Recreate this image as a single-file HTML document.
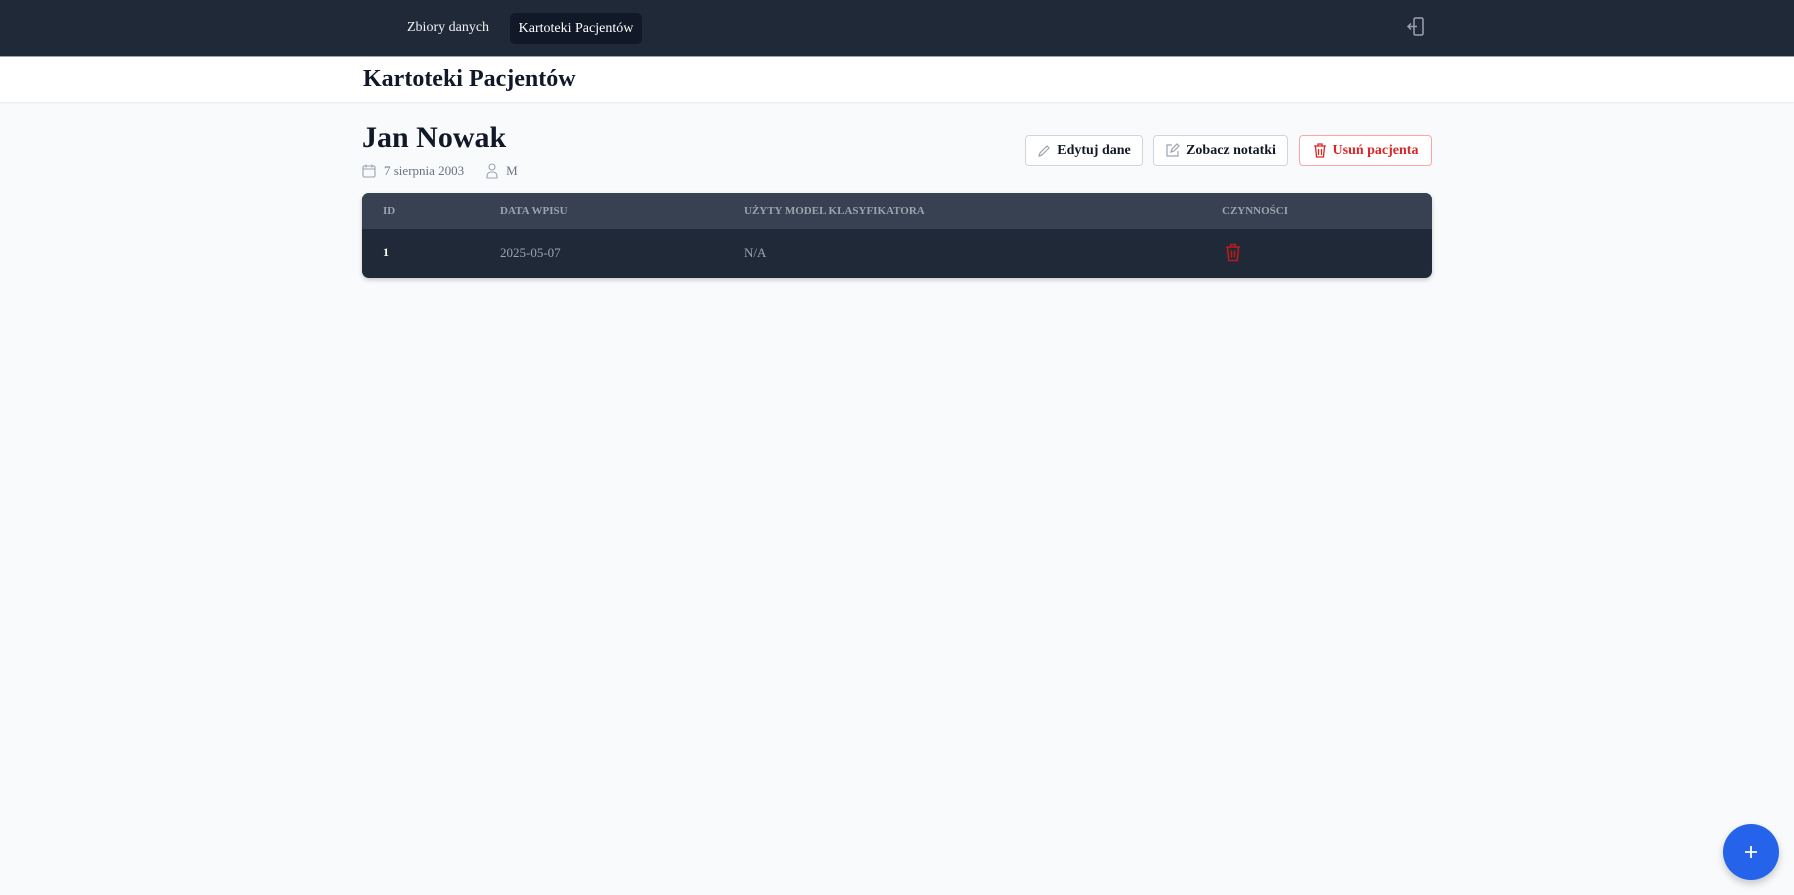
<!DOCTYPE html>
<html><head><meta charset="utf-8"><style>
*{box-sizing:border-box;margin:0;padding:0}
body{width:1794px;height:895px;background:#f8fafc;font-family:"Liberation Serif",Georgia,serif;position:relative;overflow:hidden;color:#111827}
.nav{position:absolute;left:0;top:0;width:1794px;height:56px;background:#1f2937}
.nav .a{position:absolute;top:0;height:56px;line-height:56px;font-size:14px;color:#f3f4f6;white-space:nowrap}
.pill{position:absolute;left:510px;top:13px;width:132px;height:31px;background:#111827;border-radius:5px;color:#fff;font-size:14px;line-height:31px;text-align:center;white-space:nowrap}
.hdr{position:absolute;left:0;top:56px;width:1794px;height:46px;background:#fff;border-top:1px solid #9ca3af;box-shadow:0 1px 2px rgba(0,0,0,.08)}
.hdr h1{position:absolute;left:363px;top:9px;font-size:24px;font-weight:bold;color:#111827}
.name{position:absolute;left:362px;top:121px;font-size:30px;font-weight:bold}
.meta{position:absolute;left:362px;top:163px;font-size:13px;color:#6b7280;display:flex;align-items:center}
.btn{position:absolute;top:135px;height:31px;border:1px solid #d1d5db;border-radius:4px;background:#fff;font-size:14px;font-weight:bold;display:flex;align-items:center;justify-content:center;gap:6px;color:#111827}
.tbl{position:absolute;left:362px;top:193px;width:1070px;height:85px;border-radius:7px;overflow:hidden;background:#1f2937;box-shadow:0 2px 5px rgba(0,0,0,.2)}
.th{position:absolute;top:0;left:0;right:0;height:36px;background:#374151}
.th span{position:absolute;top:12px;font-size:11px;font-weight:bold;color:#9ca3af}
.tb span{position:absolute;top:52px;font-size:13px;color:#9ca3af}
.fab{position:absolute;left:1723px;top:824px;width:56px;height:56px;border-radius:50%;background:#2563eb;box-shadow:0 4px 8px rgba(0,0,0,.2)}
</style></head><body>
<div class="nav">
<div class="a" style="left:407px">Zbiory danych</div>
<div class="pill">Kartoteki Pacjentów</div>
<svg style="position:absolute;left:1407px;top:17px" width="18" height="20" viewBox="0 0 18 20" fill="none" stroke="#9ca3af" stroke-width="1.5"><rect x="7" y="1" width="9" height="17" rx="1.5"/><path d="M10 9.5H1M4 6.5L1 9.5l3 3"/></svg>
</div>
<div class="hdr"><h1>Kartoteki Pacjentów</h1></div>
<div class="name">Jan Nowak</div>
<div class="meta">
<svg width="14" height="14" viewBox="0 0 14 14" fill="none" stroke="#9ca3af" stroke-width="1.1"><rect x="1" y="2" width="12" height="11" rx="1.5"/><path d="M1 5h12M4 0.5v3M10 0.5v3"/></svg>
<span style="margin-left:8px">7 sierpnia 2003</span>
<svg style="margin-left:22px" width="12" height="16" viewBox="0 0 12 16" fill="none" stroke="#9ca3af" stroke-width="1.1"><circle cx="6" cy="4" r="3"/><path d="M1 15v-2a4 4 0 0 1 4-4h2a4 4 0 0 1 4 4v2z"/></svg>
<span style="margin-left:8px">M</span>
</div>
<div class="btn" style="left:1025px;width:118px"><svg width="14" height="14" viewBox="0 0 14 14" fill="none" stroke="#9ca3af" stroke-width="1.2"><path d="M2 12l1-3 7-7 2 2-7 7z"/></svg>Edytuj dane</div>
<div class="btn" style="left:1153px;width:135px"><svg width="15" height="15" viewBox="0 0 15 15" fill="none" stroke="#9ca3af" stroke-width="1.2"><path d="M7 2H2v11h11V8"/><path d="M6 9l1-3 5-5 2 2-5 5z"/></svg>Zobacz notatki</div>
<div class="btn" style="left:1299px;width:133px;border-color:#fca5a5;color:#dc2626"><svg width="14" height="15" viewBox="0 0 14 15" fill="none" stroke="#dc2626" stroke-width="1.3"><path d="M1 3h12M5 3V1h4v2M2.5 3l1 11h7l1-11M5.5 6v6M8.5 6v6"/></svg>Usuń pacjenta</div>
<div class="tbl">
<div class="th"><span style="left:21px">ID</span><span style="left:138px">DATA WPISU</span><span style="left:382px">UŻYTY MODEL KLASYFIKATORA</span><span style="left:860px">CZYNNOŚCI</span></div>
<div class="tb"><span style="left:21px;color:#fff;font-weight:bold;font-size:12px">1</span><span style="left:138px">2025-05-07</span><span style="left:382px">N/A</span>
<svg style="position:absolute;left:863px;top:50px" width="16" height="19" viewBox="0 0 16 19" fill="none" stroke="#b91c1c" stroke-width="1.6"><path d="M1 4h14M5.5 4V1.5h5V4M2.5 4l1.2 13.5h8.6L13.5 4M6.5 7.5v7M9.5 7.5v7"/></svg></div>
</div>
<div class="fab"><svg style="position:absolute;left:21px;top:21px" width="14" height="14" viewBox="0 0 14 14" stroke="#fff" stroke-width="1.8"><path d="M7 1v12M1 7h12"/></svg></div>
</body></html>
